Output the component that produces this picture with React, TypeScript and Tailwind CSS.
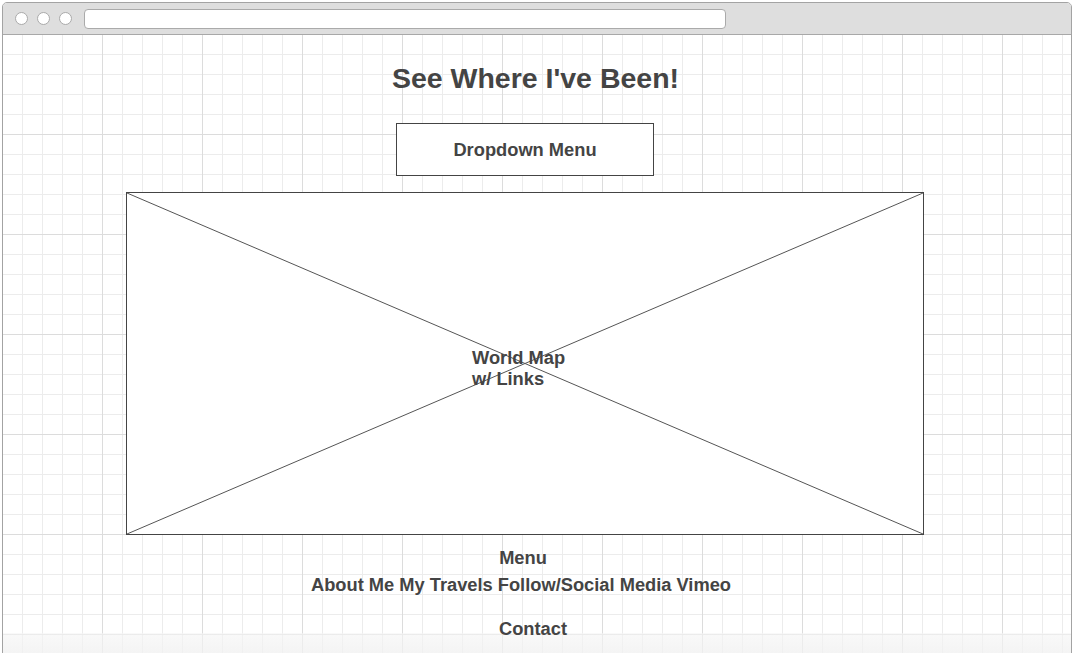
import React from 'react';

const links = ['About Me', 'My Travels', 'Follow/Social Media', 'Vimeo'];

const App: React.FC = () => {
  return (
    <div className="w-[1073px] h-[653px] bg-white overflow-hidden pl-[2px] pt-[2px] font-['Liberation_Sans',Arial,sans-serif] text-[#444]">
      {/* Browser frame */}
      <div className="w-[1070px] h-[660px] border border-[#a3a3a3] rounded-t-[5px] overflow-hidden flex flex-col">
        {/* Title bar */}
        <div className="h-[32px] shrink-0 bg-[#dedede] border-b border-[#a8a8a8] flex items-center pl-[12px] gap-[9px]">
          <span className="w-[13px] h-[13px] rounded-full bg-white border border-[#aaa]"></span>
          <span className="w-[13px] h-[13px] rounded-full bg-white border border-[#aaa]"></span>
          <span className="w-[13px] h-[13px] rounded-full bg-white border border-[#aaa]"></span>
          <span className="ml-[3px] w-[642px] h-[20px] rounded-[4px] bg-white border border-[#aaa]"></span>
        </div>

        {/* Page canvas */}
        <div className="relative flex-1 bg-white bg-[linear-gradient(to_right,#dcdcdc_1px,transparent_1px),linear-gradient(to_bottom,#dcdcdc_1px,transparent_1px),linear-gradient(to_right,#ececec_1px,transparent_1px),linear-gradient(to_bottom,#ececec_1px,transparent_1px)] bg-[size:100px_100px,100px_100px,20px_20px,20px_20px] bg-[position:-1px_-1px]">
          {/* bottom fade, under the content */}
          <div className="absolute left-0 right-0 top-[598px] h-[30px] bg-[linear-gradient(to_bottom,rgba(245,245,245,0.6),rgba(240,240,240,0.9))]"></div>

          <div className="relative flex flex-col items-center">
            <h1 className="mt-[26px] ml-[-3px] text-[28.5px] leading-[34px] font-bold">See Where I've Been!</h1>

            <div className="mt-[28px] ml-[-24px] w-[258px] h-[53px] border border-[#444] bg-white flex items-center justify-center text-[18.3px] font-bold">
              Dropdown Menu
            </div>

            <div className="relative mt-[16px] ml-[-24px] w-[798px] h-[343px] border border-[#444] bg-white">
              <svg className="absolute inset-0 w-full h-full" viewBox="0 0 796 341" preserveAspectRatio="none">
                <line x1="0" y1="0" x2="796" y2="341" stroke="#555" strokeWidth="1" />
                <line x1="796" y1="0" x2="0" y2="341" stroke="#555" strokeWidth="1" />
              </svg>
              <div className="absolute left-[345px] top-[154px] text-[18.3px] leading-[21px] font-bold">
                World Map
                <br />
                w/ Links
              </div>
            </div>

            <div className="mt-[13px] ml-[-28px] text-[18.3px] leading-[20px] font-bold">Menu</div>
            <div className="mt-[7px] ml-[-32px] flex gap-[5px] text-[18.3px] leading-[20px] font-bold">
              {links.map((l) => (
                <span key={l}>{l}</span>
              ))}
            </div>
            <div className="mt-[24px] ml-[-8px] text-[18.3px] leading-[20px] font-bold">Contact</div>
          </div>
        </div>
      </div>
    </div>
  );
};

export default App;
